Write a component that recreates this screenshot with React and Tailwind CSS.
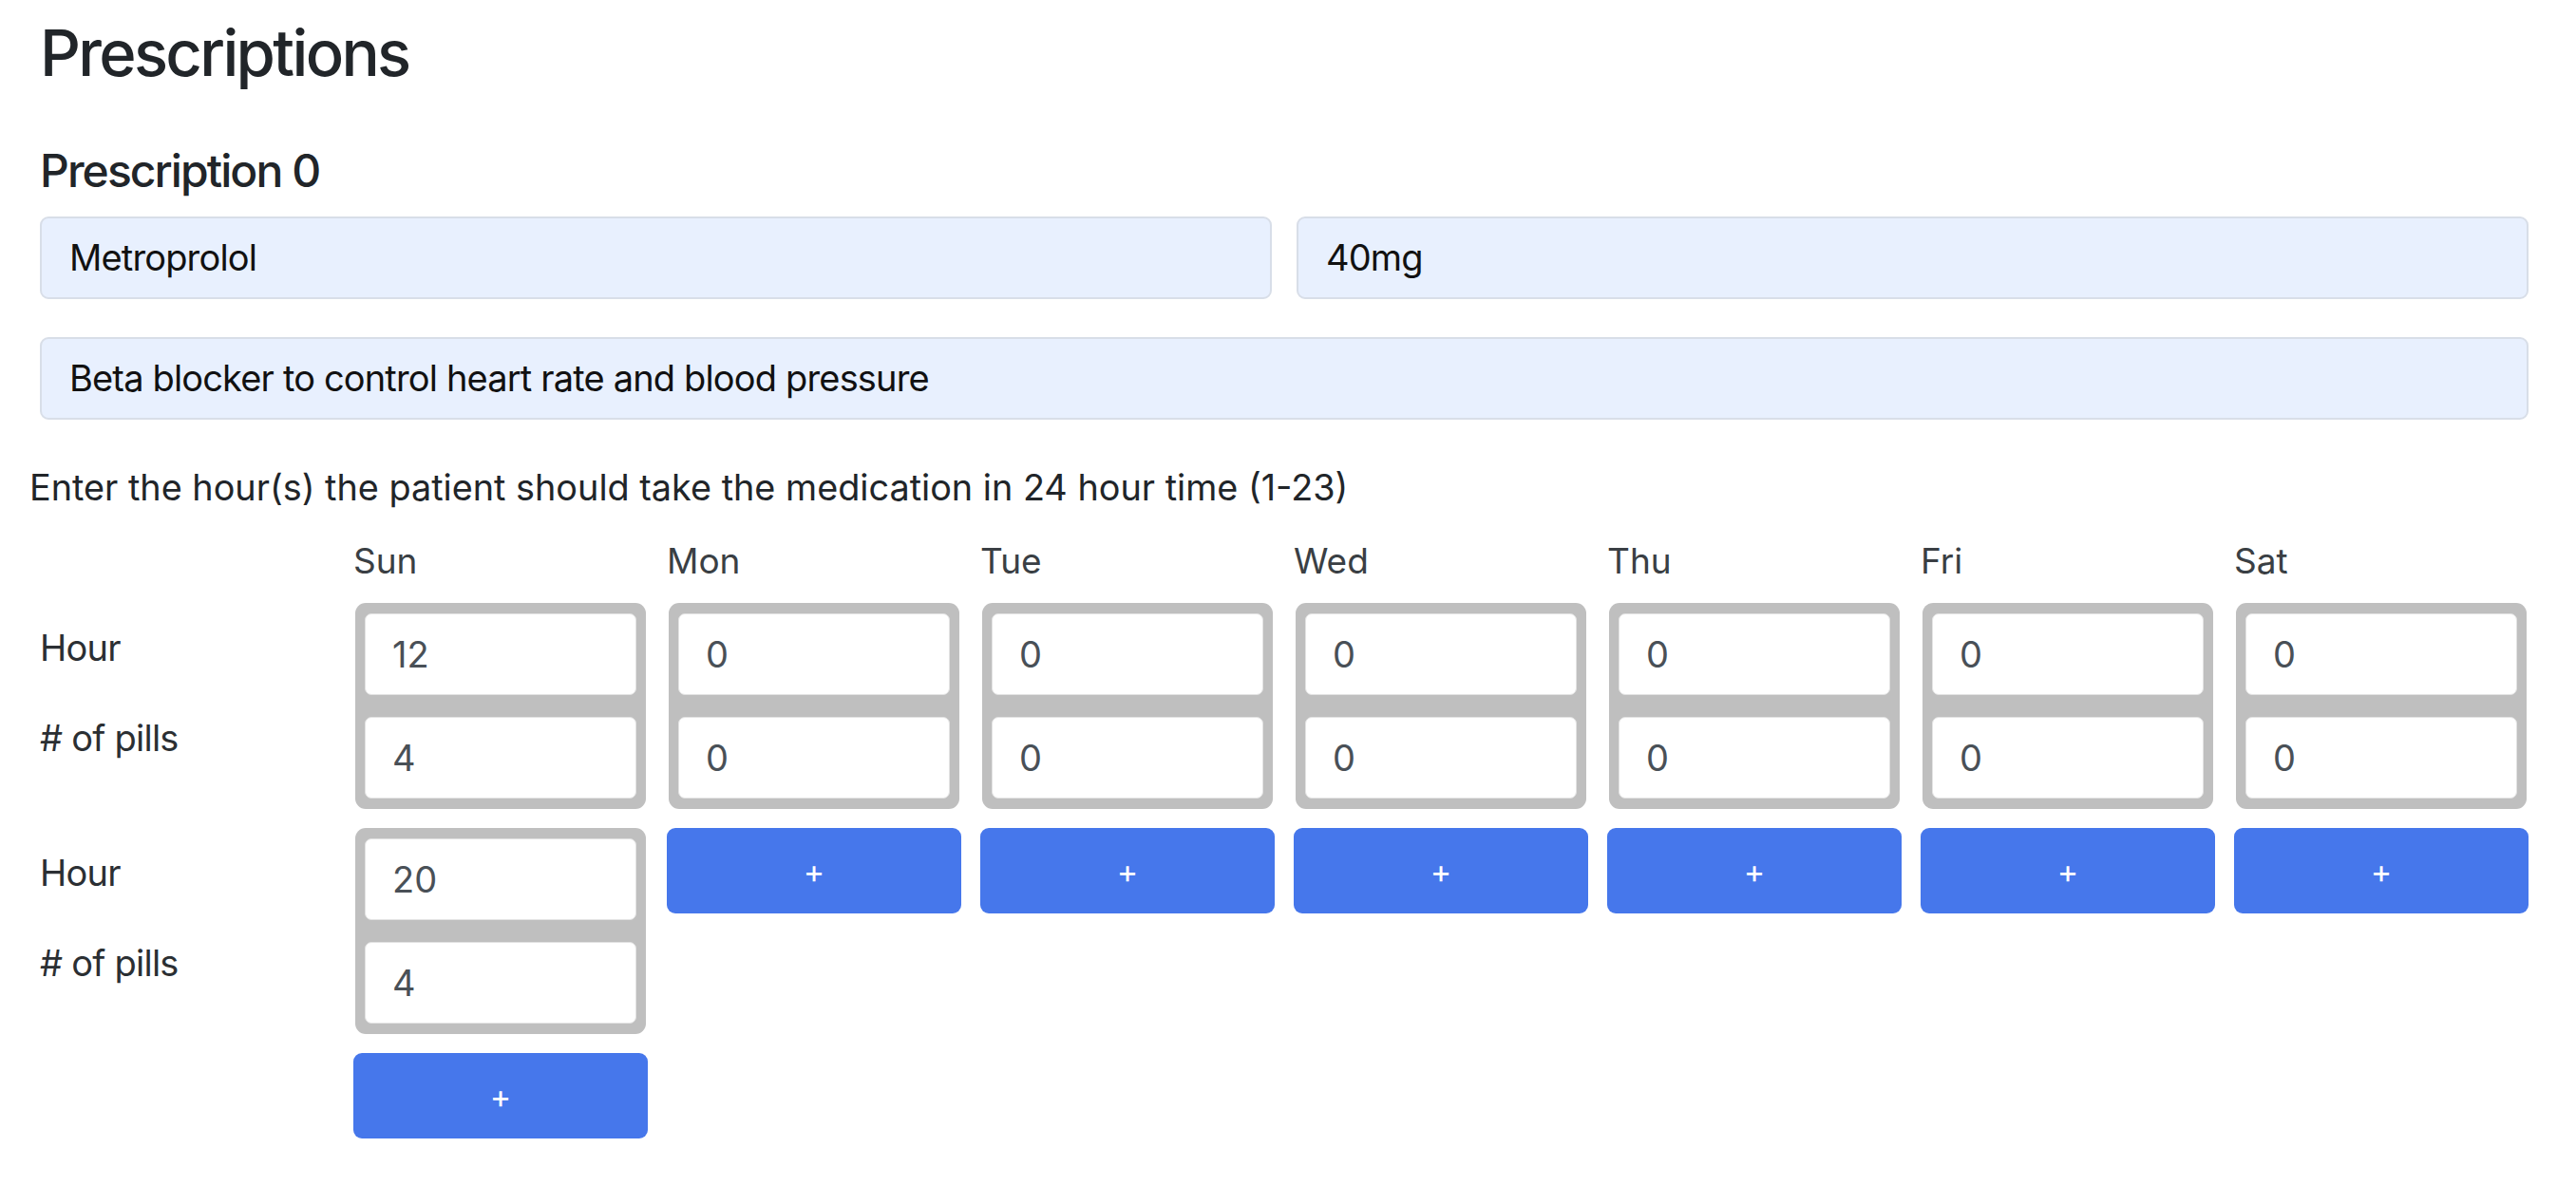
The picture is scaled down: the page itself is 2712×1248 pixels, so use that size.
import React from 'react';

const days = [
  { name: 'Sun', doses: [{ hour: 12, pills: 4 }, { hour: 20, pills: 4 }] },
  { name: 'Mon', doses: [{ hour: 0, pills: 0 }] },
  { name: 'Tue', doses: [{ hour: 0, pills: 0 }] },
  { name: 'Wed', doses: [{ hour: 0, pills: 0 }] },
  { name: 'Thu', doses: [{ hour: 0, pills: 0 }] },
  { name: 'Fri', doses: [{ hour: 0, pills: 0 }] },
  { name: 'Sat', doses: [{ hour: 0, pills: 0 }] },
];

const maxDoses = Math.max(...days.map((d) => d.doses.length));

function FilledInput({ value }) {
  return (
    <input
      readOnly
      value={value}
      className="h-[87px] w-full rounded-[9px] border-2 border-[#d8dee8] bg-[#e8f0fe] px-[29px] text-[38px] tracking-[-0.022em] text-[#111] outline-none"
    />
  );
}

function DoseBox({ dose }) {
  return (
    <div className="mx-[2px] flex flex-col gap-[23px] rounded-[11px] bg-[#bfbfbf] px-[10px] pt-[11px] pb-[11px]">
      <input readOnly value={dose.hour} className="h-[86px] w-full rounded-[7px] border border-[#e3e3e3] bg-white px-[28px] text-[38px] text-[#495057] outline-none" />
      <input readOnly value={dose.pills} className="h-[86px] w-full rounded-[7px] border border-[#e3e3e3] bg-white px-[28px] text-[38px] text-[#495057] outline-none" />
    </div>
  );
}

export default function App() {
  return (
    <div className="min-h-screen bg-white pl-[42px] pr-[50px] font-['Inter','Liberation_Sans',sans-serif]">
      <h3 className="pt-[16px] text-[67px] font-medium leading-[1.2] tracking-[-0.04em] text-[#212529]">Prescriptions</h3>

      <h5 className="mt-[55px] text-[48px] font-medium leading-[1.2] tracking-[-0.04em] text-[#212529]">Prescription 0</h5>

      <div className="mt-[19px] grid grid-cols-2 gap-[26px]">
        <FilledInput value="Metroprolol" />
        <FilledInput value="40mg" />
      </div>
      <div className="mt-[40px]">
        <FilledInput value="Beta blocker to control heart rate and blood pressure" />
      </div>

      <p className="-ml-[11px] mt-[43px] text-[37.8px] leading-[1.5] text-[#212529]">
        Enter the hour(s) the patient should take the medication in 24 hour time (1-23)
      </p>

      <div className="mt-[21px] grid grid-cols-8 gap-x-[20px]">
        <div />
        {days.map((d) => (
          <div key={d.name} className="text-[37px] leading-[1.5] text-[#3a3f44]">{d.name}</div>
        ))}

        <div className="mt-[17px] flex flex-col gap-[20px]">
          {Array.from({ length: maxDoses }).map((_, i) => (
            <div key={i} className="flex h-[217px] flex-col pt-[19px] text-[38px] leading-[1.5] tracking-[-0.02em] text-[#2b2f33]">
              <span>Hour</span>
              <span className="mt-[38px]"># of pills</span>
            </div>
          ))}
        </div>

        {days.map((d) => (
          <div key={d.name} className="mt-[17px] flex flex-col gap-[20px]">
            {d.doses.map((dose, i) => (
              <DoseBox key={i} dose={dose} />
            ))}
            <button className="flex h-[90px] w-full items-center justify-center rounded-[9px] bg-[#4677eb] text-[34px] text-white">+</button>
          </div>
        ))}
      </div>
    </div>
  );
}
